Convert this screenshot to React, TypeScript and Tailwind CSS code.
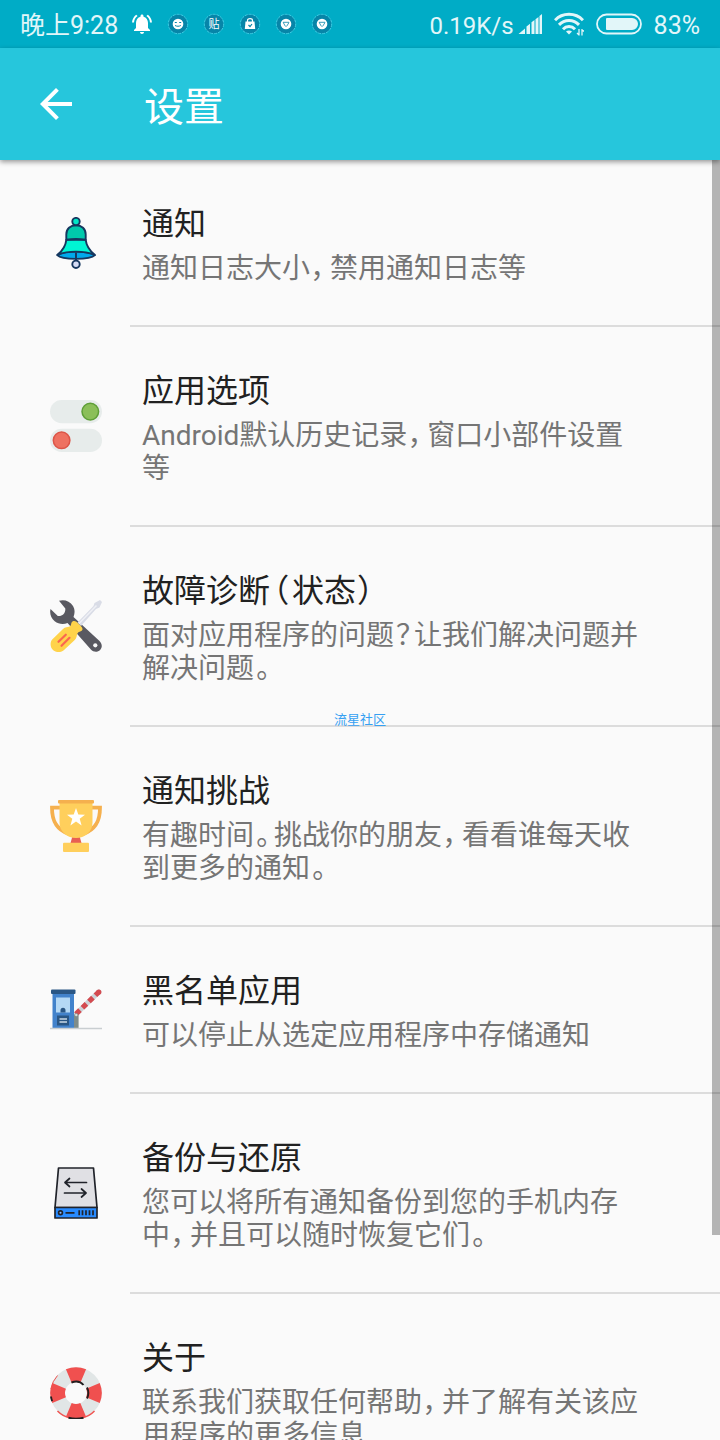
import type { ReactNode } from 'react';

const BellIcon = () => (
  <svg viewBox="0 0 52 52" className="size-[52px]" stroke="#16375f" strokeWidth="1.9" strokeLinejoin="round" aria-hidden="true">
    <path d="M7.3 38.2c5-2.8 8-3.7 18.7-3.7s14.5.9 18.9 3.700c-2.400 2.400-9 3.700-18.900 3.700S9.500 40.600 7.300 38.200z" fill="#00a9ec" />
    <path d="M16.300 22.800c-.6 6.200-3.200 10.300-8.800 15 6-2.300 11.300-3.200 18.500-3.200s13 1 18.700 3.200c-5.600-4.700-8.300-8.800-9-15z" fill="#00f5d4" />
    <path d="M16.300 22.800V17.600c0-5.600 4-9.400 9.700-9.400s9.700 3.800 9.700 9.400v5.200c-6-1-13.400-1-19.400 0z" fill="#00c9ac" />
    <circle cx="26" cy="4.600" r="3.700" fill="#00e6c6" />
    <path d="M26 35.500v8" fill="none" />
    <circle cx="26" cy="47.300" r="3.700" fill="#d5dcf5" />
  </svg>
);

const ToggleIcon = () => (
  <svg viewBox="0 0 52 52" className="size-[52px]" aria-hidden="true">
    <rect x="0" y="0" width="52" height="23.200" rx="11.600" fill="#e7eceb" />
    <rect x="0" y="28.800" width="52" height="23.200" rx="11.600" fill="#e7eceb" />
    <circle cx="40.300" cy="11.600" r="8.300" fill="#8bbf59" stroke="#5f9f38" strokeWidth="1.500" />
    <circle cx="11.600" cy="40.300" r="8.300" fill="#ee7161" stroke="#dc5548" strokeWidth="1.500" />
  </svg>
);

const ToolsIcon = () => (
  <svg viewBox="0 0 52 52" className="size-[52px]" aria-hidden="true">
    <path d="M9 .8C14-.8 20 1 23 6c2 3.500 2 7 .5 11L49.500 41c2.800 3 3 6.500.6 9s-6.600 2.400-9.200-.4L17.500 23c-4 1.800-9 1.300-12.800-1.700C1 18.300-.6 13.500.5 9l7.300 7c4.500.5 7.900-2.500 7.500-7.500z" fill="#595961" />
    <circle cx="45.300" cy="45.300" r="2.100" fill="#fafafa" />
    <path d="M27.500 22.500L43.500 6l1-3 5.500-3 2 2-2.500 5.500-3.500 1.500L31 26z" fill="#d9dce6" />
    <path d="M29 23.500L46.500 5.500" stroke="#eff0f5" strokeWidth="1.500" />
    <path d="M22.500 21.500c2-1 3.500-.2 5 1.300l3.500 3.400c1.500 1.500 2 3 1 4.300-1.500 1.500-3.500.7-4.500 2.700-.8 2-.7 4.500-2.500 6.500L14 50c-2.800 2.800-8 2.800-11 0s-3.300-8.300-.3-11L13 29c2.300-2.200 4.500-1.800 6.500-2.500 2.500-1 1-3.800 3-5z" fill="#ffd34b" />
    <path d="M8.500 41.800l7.300-7.100M11.500 45.800l8-8" stroke="#fa6650" strokeWidth="2.200" strokeLinecap="round" />
  </svg>
);

const TrophyIcon = () => (
  <svg viewBox="0 0 52 52" className="size-[52px]" aria-hidden="true">
    <path d="M10 7.700H2c0 12 3.500 21.500 16.500 26M42 7.700h8c0 12-3.500 21.500-16.500 26" fill="none" stroke="#f5b04e" strokeWidth="3.800" />
    <path d="M22.500 36h7l2 7h-11z" fill="#e85f53" />
    <path d="M9.500 2.500h33v19.800C42.500 31 36 38 26 38S9.500 31 9.500 22.300z" fill="#ffcf5c" />
    <rect x="8" y="0" width="36" height="3.500" rx="1" fill="#f5b04e" />
    <rect x="13" y="42.700" width="26" height="9.300" rx="1" fill="#ffcf5c" />
    <path d="M26 8l2.300 6.500 6.700.2-5.300 4.100 1.900 6.700-5.600-3.900-5.600 3.900 1.900-6.700-5.300-4.100 6.700-.2z" fill="#fff" />
  </svg>
);

const BarrierIcon = () => (
  <svg viewBox="0 0 52 52" className="size-[52px]" aria-hidden="true">
    <path d="M27 29L48.800 8" stroke="#cdd4d8" strokeWidth="5.200" strokeLinecap="round" />
    <path d="M26 30L48.800 8" stroke="#d44b50" strokeWidth="5.200" strokeDasharray="5.500 3.500" />
    <circle cx="48.800" cy="8" r="2.600" fill="#d44b50" />
    <rect x="2.500" y="8" width="21.500" height="36" fill="#4282cb" />
    <rect x="1" y="5.500" width="24.500" height="4.500" rx="1" fill="#2a5684" />
    <rect x="6" y="13.500" width="14" height="15" fill="#b4d8f5" />
    <path d="M10.500 28.500v-2.200a2.500 2.500 0 0 1 5 0v2.200z" fill="#2a5684" />
    <rect x="7" y="31.500" width="12" height="10" fill="#2a5684" />
    <path d="M9.500 35h7.500M9.500 38h7.500" stroke="#cad9e5" strokeWidth="1.500" />
    <path d="M24 44V31.500a2.300 2.300 0 0 1 4.600 0V44z" fill="#7f8c89" />
    <circle cx="26.300" cy="31" r="1.200" fill="#d8dfdc" />
    <path d="M0 44.600h52" stroke="#c9ced1" strokeWidth="1.500" />
  </svg>
);

const DriveIcon = () => (
  <svg viewBox="0 0 52 52" className="size-[52px]" stroke="#20232a" strokeWidth="1.700" strokeLinejoin="round" aria-hidden="true">
    <path d="M8.500 1h35l3.500 39.500H5z" fill="#e0e0e4" />
    <path d="M5 40.500h42V51H5z" fill="#288bff" />
    <path d="M36.500 15.500H15m4.500-4L15 15.500l4.500 4M14.500 26H36m-4.500-4l4.500 4-4.500 4" fill="none" strokeLinecap="round" />
    <circle cx="10.500" cy="45.800" r="1.900" fill="#8dbbff" />
    <path d="M15.500 45.800h9M29.200 43.300v5M32.500 43.300v5M36 43.300v5M39.500 43.300v5M43 43.300v5" fill="none" />
  </svg>
);

const LifebuoyIcon = () => (
  <svg viewBox="0 0 52 52" className="size-[52px]" fill="none" aria-hidden="true">
    <circle cx="26" cy="26" r="18.400" stroke="#e1e6e6" strokeWidth="14.600" />
    <path d="M7.500 44A25.300 25.300 0 0 0 20 51M32 51A25.300 25.300 0 0 0 44.500 44" stroke="#f05552" strokeWidth="1.500" />
    <path d="M1 22A25.500 25.500 0 0 1 7.500 8.500" stroke="#f05552" strokeWidth="1" />
    <g stroke="#f0504f" strokeWidth="14.800">
      <path d="M18.800 9.100A18.400 18.400 0 0 1 33.200 9.100" />
      <path d="M42.900 18.800A18.400 18.400 0 0 1 42.900 33.200" />
      <path d="M33.200 42.900A18.400 18.400 0 0 1 18.800 42.900" />
      <path d="M9.100 33.200A18.400 18.400 0 0 1 9.100 18.800" />
    </g>
    <path d="M1 29.500c.2 1.800.6 3 1.200 4.600M18.500 50.700c5 1.500 10 1.500 15 0M21.500 15.500c5-1.800 9.500-.5 12 2.500M37 20.500c1.700 3.500 1.700 7.500 0 11" stroke="#231f20" strokeWidth="1.900" />
  </svg>
);

type Setting = {
  title: string;
  description: string;
  icon: ReactNode;
};

const settings: Setting[] = [
  { title: '通知', description: '通知日志大小，禁用通知日志等', icon: <BellIcon /> },
  { title: '应用选项', description: 'Android默认历史记录，窗口小部件设置等', icon: <ToggleIcon /> },
  { title: '故障诊断（状态）', description: '面对应用程序的问题？让我们解决问题并解决问题。', icon: <ToolsIcon /> },
  { title: '通知挑战', description: '有趣时间。挑战你的朋友，看看谁每天收到更多的通知。', icon: <TrophyIcon /> },
  { title: '黑名单应用', description: '可以停止从选定应用程序中存储通知', icon: <BarrierIcon /> },
  { title: '备份与还原', description: '您可以将所有通知备份到您的手机内存中，并且可以随时恢复它们。', icon: <DriveIcon /> },
  { title: '关于', description: '联系我们获取任何帮助，并了解有关该应用程序的更多信息', icon: <LifebuoyIcon /> },
];

// Gives the proportional punctuation marks a little air on both sides
const Punctuated = ({ text }: { text: string }) =>
  text.split(/([，。？（）])/).map((part, i) =>
    i % 2 ? (
      <span key={i} className="pr-1 pl-0.5">
        {part}
      </span>
    ) : (
      part
    )
  );

// Round app badge used in the status bar
const Badge = ({ children }: { children?: ReactNode }) => (
  <svg viewBox="0 0 24 24" className="size-6" aria-hidden="true">
    <circle cx="12" cy="12" r="9.700" fill="#0785a8" stroke="#3fcbe2" strokeWidth="1" strokeDasharray="3 1" />
    {children}
  </svg>
);

const ChromeBadge = () => (
  <Badge>
    <circle cx="12" cy="12" r="5.300" fill="#fff" />
    <path d="M9 10.300h6M9.200 10.500l2.300 4M15 10.500l-2.500 4" stroke="#0785a8" strokeWidth=".8" />
  </Badge>
);

const StatusBar = () => (
  <div className="flex h-12 shrink-0 items-center justify-between bg-[#00acc6] px-5 text-[#e2f6f9]">
    <div className="flex items-center gap-3">
      <span className="pt-1 text-[25px] leading-8">晚上9:28</span>
      <svg viewBox="0 0 24 24" className="size-6" fill="#fff" aria-hidden="true">
        <path d="M7.580 4.080L6.150 2.650C3.750 4.480 2.170 7.300 2.030 10.500h2a8.445 8.445 0 0 1 3.550-6.420zM19.970 10.500h2c-.15-3.200-1.730-6.020-4.120-7.850l-1.420 1.430a8.495 8.495 0 0 1 3.540 6.420zM18 11c0-3.070-1.640-5.640-4.500-6.320V4c0-.83-.67-1.500-1.500-1.500s-1.500.67-1.500 1.500v.68C7.630 5.360 6 7.920 6 11v5l-2 2v1h16v-1l-2-2v-5zM12 22c1.100 0 2-.9 2-2h-4c0 1.100.9 2 2 2z" />
      </svg>
      <Badge>
        <circle cx="12" cy="12" r="5.300" fill="#fff" />
        <path d="M8.800 10.500h2M13.200 10.500h2M9 13.500c2 1 4 1 5.800 0" fill="none" stroke="#0785a8" strokeWidth="1" />
      </Badge>
      <Badge>
        <text x="12" y="16" fontSize="11" textAnchor="middle" fill="#fff">贴</text>
      </Badge>
      <Badge>
        <path d="M7.500 9.500h9l.7 7.500H6.800z" fill="#fff" />
        <path d="M9.500 10V8.500c0-2.500 5-2.500 5 0V10" fill="none" stroke="#fff" strokeWidth="1.200" />
        <path d="M10.500 13l1.500 1.500 2-2.500" fill="none" stroke="#0785a8" strokeWidth="1.200" />
      </Badge>
      <ChromeBadge />
      <ChromeBadge />
    </div>
    <div className="flex items-center">
      <span className="pt-1 text-2xl">0.19K/s</span>
      <svg viewBox="0 0 24 20" className="ml-1 h-5 w-6" fill="currentColor" aria-hidden="true">
        <path d="M.5 20l6.500-5.500V20zM8.500 12.500l3.500-2.700V20H8.500zM13.500 8.300l3-2.300v14h-3zM17.500 5.200l3-2.300V20h-3zM21.500 2L24 0v20h-2.500z" />
      </svg>
      <svg viewBox="0 0 30 24" className="ml-3 h-6 w-[30px]" fill="none" stroke="currentColor" strokeWidth="3" aria-hidden="true">
        <path d="M1 8.300C8.500.3 21.500.3 29 8.300M5 12.900c5.500-5.800 14.500-5.800 20 0M9 17.200c3.300-3.500 8.700-3.500 12 0" />
        <path d="M15 22.500l-3-3c1.700-1.400 4.300-1.400 6 0z" fill="currentColor" stroke="none" />
        <path d="M25 17v6.500M28 17v6.500M23 21l2 2M28 17.500l2 2" strokeWidth="1.300" />
      </svg>
      <svg viewBox="0 0 46 22" className="ml-3 h-[22px] w-[46px]" aria-hidden="true">
        <rect x="1" y="1.500" width="44" height="19" rx="9.500" fill="none" stroke="currentColor" strokeWidth="1.800" />
        <path d="M11 5h25a6 6 0 0 1 0 12H11a1 1 0 0 1-1-1V6a1 1 0 0 1 1-1z" fill="currentColor" />
      </svg>
      <span className="ml-3 pt-1 text-[25px] leading-8">83%</span>
    </div>
  </div>
);

const SettingRow = ({ title, description, icon }: Setting) => (
  <li>
    <button type="button" className="flex w-full items-stretch text-left">
      <span className="flex w-[130px] shrink-0 items-center pb-0.5 pl-[50px]">{icon}</span>
      <span className="block flex-1 border-b-2 border-[#dcdcdc] pt-10 pr-[78px] pb-10 pl-3">
        <span className="block text-[32px] leading-[48px] text-[#212121]">
          <Punctuated text={title} />
        </span>
        <span className="mt-1 block text-[28px] leading-[33px] text-[#757575]">
          <Punctuated text={description} />
        </span>
      </span>
    </button>
  </li>
);

export default function App() {
  return (
    <div
      lang="zh-CN"
      className="relative flex h-screen flex-col overflow-hidden bg-[#fafafa] font-[Roboto,'Noto_Sans_CJK_SC',sans-serif] [font-feature-settings:'palt']"
    >
      <StatusBar />
      <header className="z-10 flex h-28 shrink-0 items-center gap-16 bg-[#26c6dc] pl-8 text-white shadow-[0_2px_5px_rgba(0,0,0,0.4)]">
        <button type="button" aria-label="返回">
          <svg viewBox="0 0 24 24" className="size-12" fill="currentColor" aria-hidden="true">
            <path d="M20 11H7.830l5.590-5.590L12 4l-8 8 8 8 1.410-1.410L7.830 13H20v-2z" />
          </svg>
        </button>
        <h1 className="pt-2 text-[40px] leading-[48px]">设置</h1>
      </header>

      <main className="relative min-h-0 flex-1">
        <ul className="h-full overflow-y-auto [scrollbar-width:none]">
          {settings.map((setting) => (
            <SettingRow key={setting.title} {...setting} />
          ))}
        </ul>
        {/* Scroll thumb floats over the list */}
        <div className="absolute top-0 right-0 h-[84%] w-2 bg-black/28" />
      </main>

      <div className="pointer-events-none absolute inset-0 flex items-center justify-center text-[13px] text-[#36a0f2]">
        流星社区
      </div>
    </div>
  );
}
